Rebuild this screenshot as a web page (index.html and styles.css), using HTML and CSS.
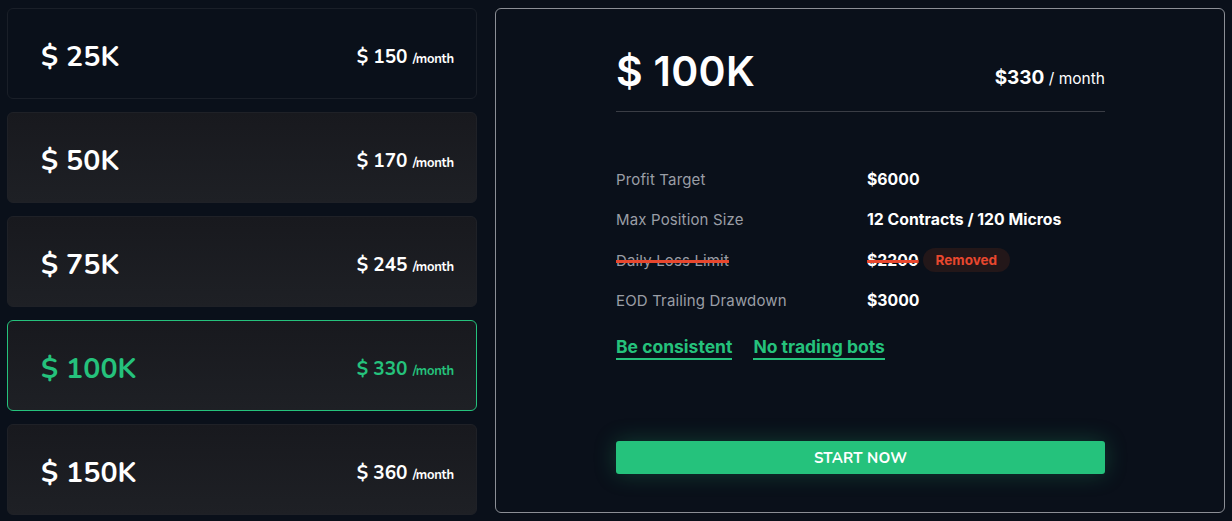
FILE: index.html
```html
<!DOCTYPE html>
<html lang="en">
<head>
<meta charset="utf-8">
<title>Plans</title>
<link rel="stylesheet" href="styles.css">
</head>
<body>
<main class="layout">
  <section class="plans">
    <div class="plan plan-plain">
      <span class="plan-size">$ 25K</span>
      <span class="plan-price">$ 150 <small>/month</small></span>
    </div>
    <div class="plan">
      <span class="plan-size">$ 50K</span>
      <span class="plan-price">$ 170 <small>/month</small></span>
    </div>
    <div class="plan">
      <span class="plan-size">$ 75K</span>
      <span class="plan-price">$ 245 <small>/month</small></span>
    </div>
    <div class="plan plan-active">
      <span class="plan-size">$ 100K</span>
      <span class="plan-price">$ 330 <small>/month</small></span>
    </div>
    <div class="plan">
      <span class="plan-size">$ 150K</span>
      <span class="plan-price">$ 360 <small>/month</small></span>
    </div>
  </section>
  <section class="detail">
    <div class="detail-inner">
      <header class="detail-head">
        <h1 class="detail-title">$ 100K</h1>
        <div class="detail-price"><strong>$330</strong> / month</div>
      </header>
      <dl class="rules">
        <dt>Profit Target</dt><dd>$6000</dd>
        <dt>Max Position Size</dt><dd>12 Contracts / 120 Micros</dd>
        <dt class="struck">Daily Loss Limit</dt><dd><span class="struck">$2200</span><span class="badge">Removed</span></dd>
        <dt>EOD Trailing Drawdown</dt><dd>$3000</dd>
      </dl>
      <div class="links">
        <a class="link" href="#">Be consistent</a>
        <a class="link" href="#">No trading bots</a>
      </div>
      <button class="cta" type="button">START NOW</button>
    </div>
  </section>
</main>
</body>
</html>
```

FILE: styles.css
```css
* { box-sizing: border-box; }
html, body { margin: 0; padding: 0; }
body {
  background: #0a101a;
  color: #fff;
  font-family: Inter, "Noto Sans", sans-serif;
  width: 1232px;
  height: 521px;
  overflow: hidden;
}
.layout {
  display: grid;
  grid-template-columns: 470px 730px;
  column-gap: 18px;
  padding: 8px 7px;
}
.plans {
  display: flex;
  flex-direction: column;
  gap: 13px;
}
.plan {
  height: 91px;
  border-radius: 6px;
  background: linear-gradient(180deg, #18191e 0%, #1e2025 100%);
  border: 1px solid #1f2127;
  display: flex;
  align-items: center;
  justify-content: space-between;
  padding: 6px 22px 0 33px;
  font-family: Nunito, "Nunito Sans", Lato, sans-serif;
  font-weight: 700;
}
.plan-plain {
  background: #0a101a;
  border-color: #1a1f28;
}
.plan-active {
  border-color: #25c27c;
  color: #25c27c;
}
.plan-size {
  font-size: 28.5px;
  letter-spacing: 0.1px;
}
.plan-price {
  font-size: 19px;
}
.plan-price small {
  font-size: 13px;
  font-weight: 700;
  letter-spacing: -0.2px;
}
.detail {
  height: 505px;
  border: 1px solid #8c8f96;
  border-radius: 6px;
  background: #0a101a;
  padding: 0 119px 0 120px;
}
.detail-inner {
  display: flex;
  flex-direction: column;
}
.detail-head {
  display: flex;
  justify-content: space-between;
  align-items: baseline;
  border-bottom: 1px solid #3a3d45;
  padding: 38px 0 16px;
}
.detail-title {
  margin: 0;
  font-size: 41px;
  font-weight: 600;
  line-height: 48px;
  letter-spacing: 0.3px;
}
.detail-price {
  font-size: 15.5px;
  color: #fff;
  position: relative;
  top: -2px;
}
.detail-price strong {
  font-size: 19px;
  font-weight: 700;
}
.rules {
  display: grid;
  grid-template-columns: 251px 1fr;
  row-gap: 0;
  margin: 47px 0 0;
}
.rules dt, .rules dd {
  margin: 0;
  height: 40.5px;
  display: flex;
  align-items: center;
  font-size: 15px;
}
.rules dt {
  color: #9a9ea6;
  letter-spacing: 0.15px;
}
.rules dd {
  font-weight: 700;
  font-size: 15.8px;
  color: #fff;
  gap: 4px;
}
.struck {
  text-decoration: line-through;
  text-decoration-color: #e8472e;
  text-decoration-thickness: 3px;
}
.badge {
  background: #231719;
  color: #e8472e;
  font-size: 13.5px;
  font-weight: 700;
  border-radius: 12px;
  padding: 4px 13px;
  line-height: 16px;
}
.links {
  display: flex;
  gap: 21px;
  margin-top: 16px;
}
.link {
  color: #25c27c;
  font-weight: 700;
  font-size: 17.5px;
  text-decoration: none;
  border-bottom: 2px solid #25c27c;
  padding-bottom: 1px;
  line-height: 20px;
}
.cta {
  margin-top: 81px;
  height: 33px;
  border: 0;
  border-radius: 3px;
  background: #25c27c;
  color: #fff;
  font-family: Nunito, "Nunito Sans", Lato, sans-serif;
  font-weight: 700;
  font-size: 15px;
  letter-spacing: 0.2px;
  box-shadow: 0 0 22px rgba(37, 194, 124, 0.25);
  cursor: pointer;
}
```
